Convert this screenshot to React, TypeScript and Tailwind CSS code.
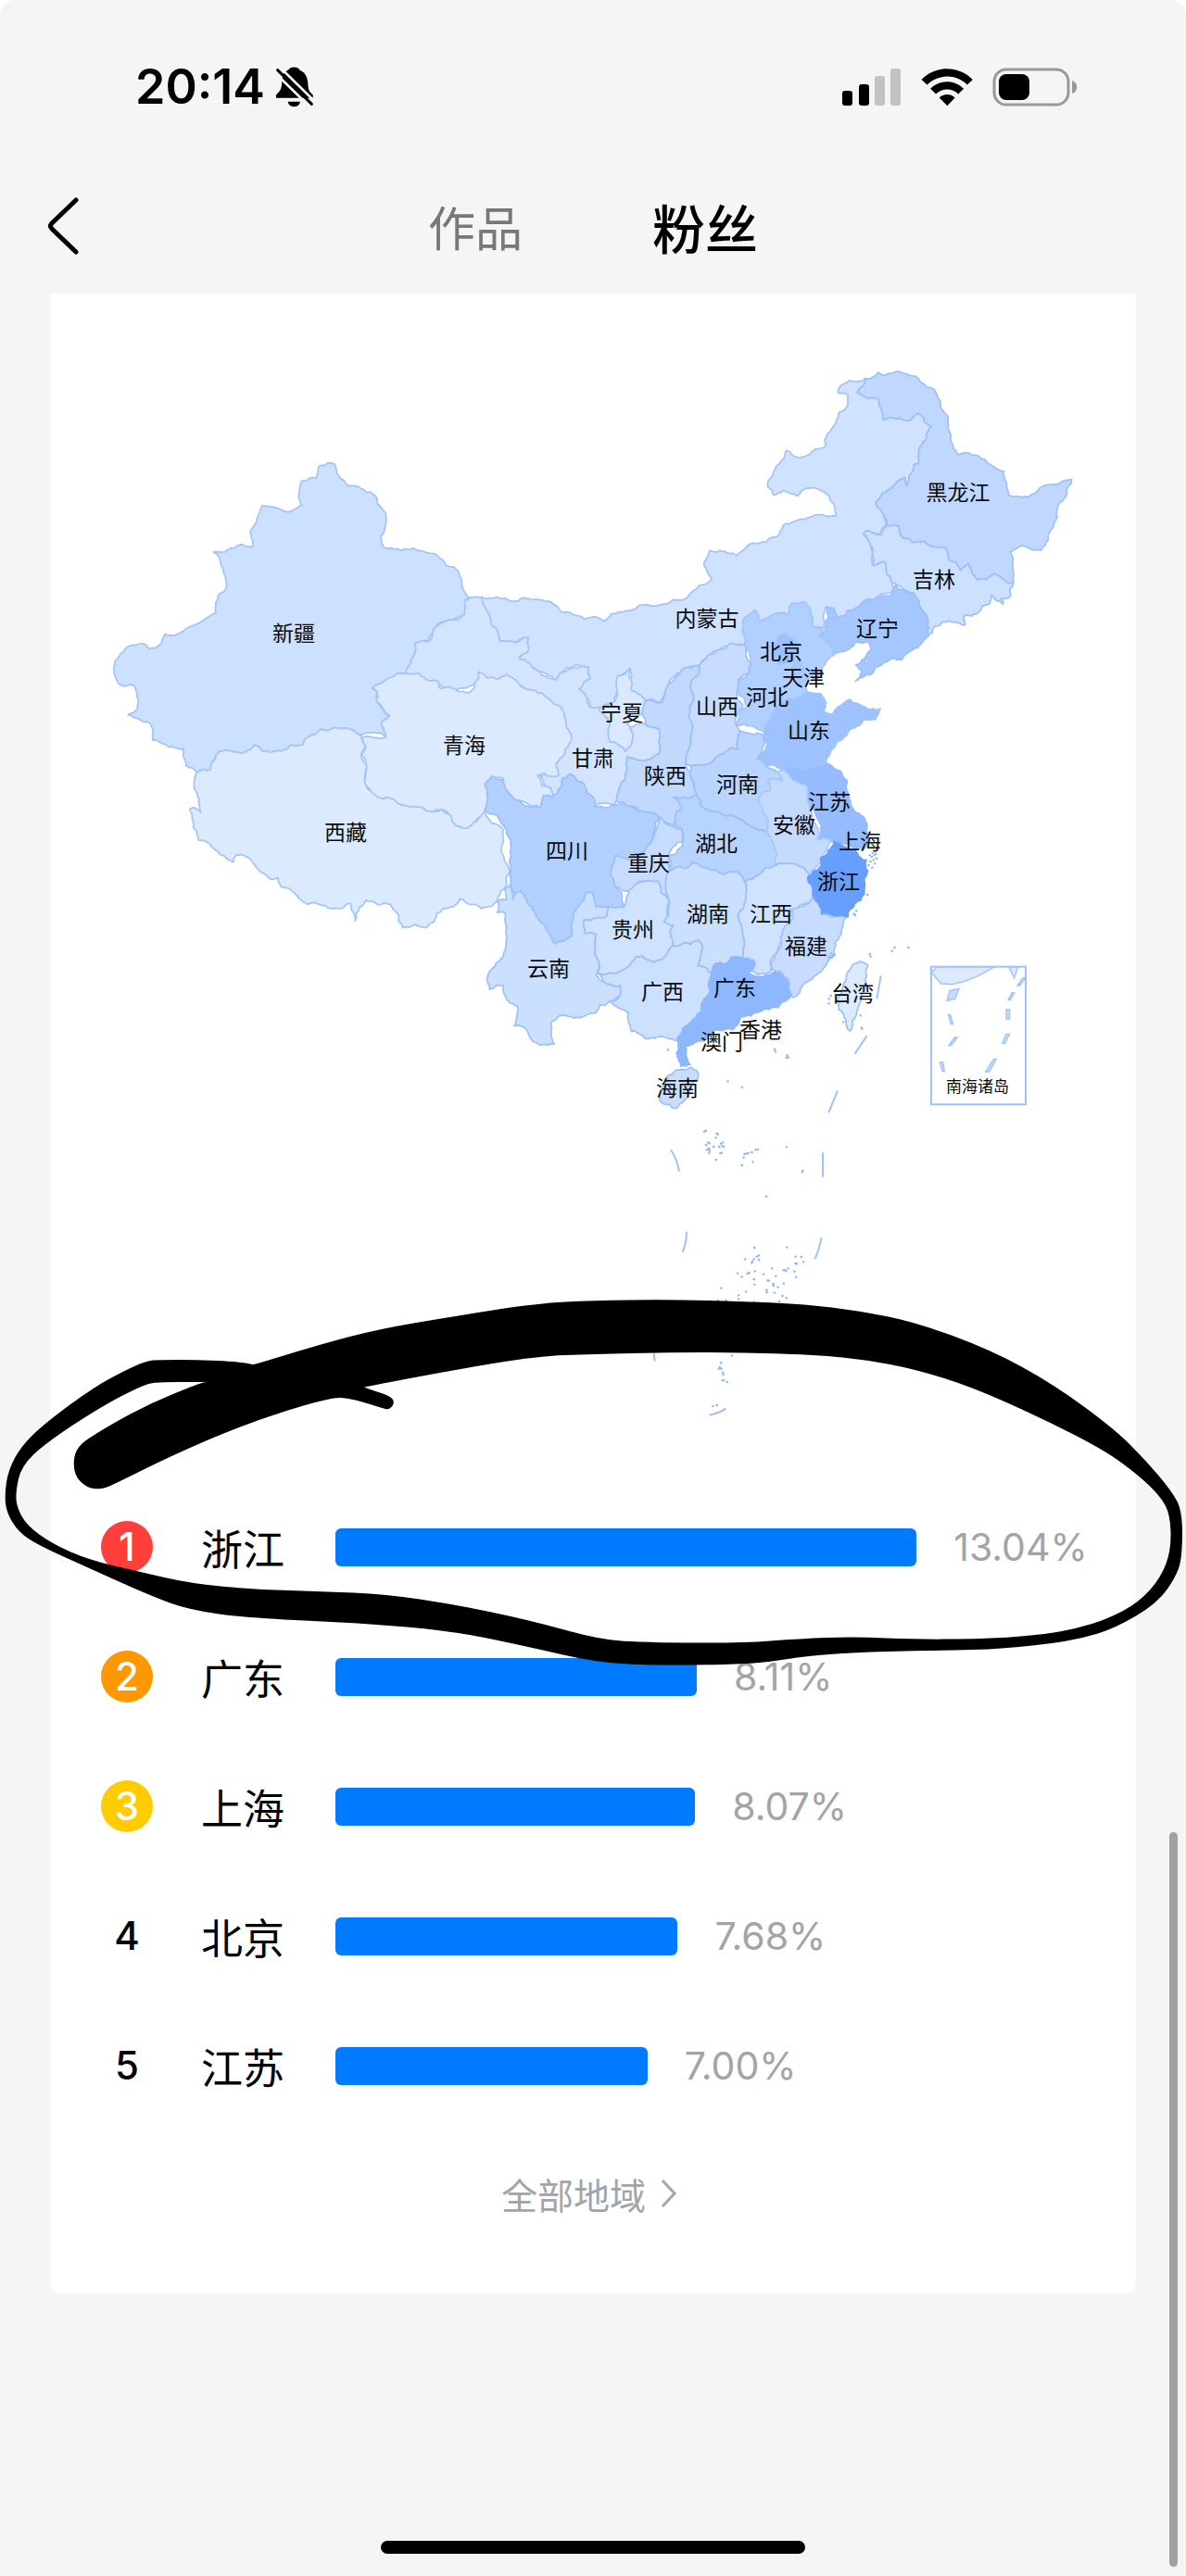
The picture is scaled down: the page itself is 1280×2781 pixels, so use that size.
import { useState } from "react";

type Pt = [number, number];

const parse = (s: string): Pt[] =>
  s
    .trim()
    .split(/\s+/)
    .map((p) => p.split(",").map(Number) as Pt);

// small repeatable bump so that a border gets the same shape from both sides
const bump = (a: Pt, b: Pt) => {
  const n = Math.sin(a[0] * 12.9 + a[1] * 78.2 + b[0] * 37.7 + b[1] * 4.1) * 43758.5;
  return n - Math.floor(n) - 0.5;
};

const split = (a: Pt, b: Pt, depth: number): Pt[] => {
  const flip = a[0] > b[0] || (a[0] === b[0] && a[1] > b[1]);
  const [p, q] = flip ? [b, a] : [a, b];
  const dx = q[0] - p[0];
  const dy = q[1] - p[1];
  if (depth === 0 || Math.hypot(dx, dy) < 9) return [a];
  const k = bump(p, q) * 0.3;
  const mid: Pt = [(p[0] + q[0]) / 2 - dy * k, (p[1] + q[1]) / 2 + dx * k];
  return [...split(a, mid, depth - 1), ...split(mid, b, depth - 1)];
};

const border = (s: string) => {
  const pts = parse(s);
  const out = pts.flatMap((p, i) => split(p, pts[(i + 1) % pts.length], 3));
  return "M" + out.map(([x, y]) => `${x.toFixed(1)},${y.toFixed(1)}`).join("L") + "Z";
};

// closed curve that rounds every corner between the midpoints
const curve = (s: string) => {
  const p = parse(s);
  const mid = (a: Pt, b: Pt) => `${(a[0] + b[0]) / 2},${(a[1] + b[1]) / 2}`;
  let d = `M${mid(p[p.length - 1], p[0])}`;
  p.forEach((pt, i) => {
    d += `Q${pt[0]},${pt[1]} ${mid(pt, p[(i + 1) % p.length])}`;
  });
  return d + "Z";
};

// the map is stored in four sheets, each with its own origin and scale
const sheets = [
  {
    transform: "translate(100 470) scale(.33333 .35714)",
    regions: [
      {
        name: "新疆",
        fill: "#cce0ff",
        line: "#a3c3fb",
        pts: "735,92 785,88 795,120 830,155 875,162 905,175 925,210 950,240 945,285 932,310 945,340 1000,348 1075,352 1145,395 1170,398 1195,455 1220,490 1205,500 1205,540 1150,560 1110,580 1090,620 1045,628 1030,690 1015,720 905,765 922,775 920,805 962,848 935,870 950,912 870,905 825,886 770,890 710,905 680,935 610,955 550,955 525,935 475,960 410,955 380,1012 340,1018 303,1000 295,948 245,942 195,922 185,870 115,845 145,828 130,755 85,752 68,705 90,660 165,630 180,645 215,635 235,600 275,600 400,535 410,480 432,462 410,370 390,352 480,330 520,335 510,290 548,212 640,230 678,212 675,140 725,128",
      },
      {
        name: "西藏",
        fill: "#dceaff",
        line: "#a3c3fb",
        pts: "340,1018 380,1012 410,955 475,960 525,935 550,955 610,955 680,935 710,905 770,890 825,886 870,905 885,940 870,965 888,1000 880,1040 900,1075 940,1098 975,1100 1010,1118 1080,1135 1130,1130 1160,1150 1175,1180 1210,1188 1269,1137 1329,1193 1350,1313 1341,1358 1311,1403 1260,1431 1200,1403 1190,1400 1160,1425 1115,1445 1080,1488 1005,1488 990,1450 965,1418 885,1405 865,1425 850,1468 835,1415 770,1430 695,1418 655,1385 610,1365 600,1338 570,1338 500,1275 465,1268 455,1290 395,1252 345,1225 325,1185 315,1130 330,1125 350,1140 345,1100 328,1065 330,1035",
      },
    ],
  },
  {
    transform: "translate(740 380) scale(.33333 .35714)",
    regions: [
      {
        name: "内蒙古",
        fill: "#cfe2ff",
        line: "#a3c3fb",
        pts: "580,80 530,85 495,110 495,125 525,130 525,160 495,185 470,235 450,265 455,280 420,293 375,318 325,298 280,375 265,405 285,433 320,418 360,435 390,412 440,420 480,460 487,495 440,492 365,508 320,520 300,555 260,575 220,578 165,615 110,600 80,600 60,635 85,685 45,705 0,745 -80,764 -150,766 -210,786 -265,814 -290,801 -365,794 -430,761 -490,748 -560,754 -660,741 -630,825 -600,875 -510,864 -510,903 -540,925 -480,963 -420,991 -405,969 -315,952 -310,986 -345,1019 -310,1074 -230,1058 -220,980 -180,956 -180,1024 -130,1054 -80,1058 -55,1002 -10,958 45,947 100,903 190,885 185,820 225,780 240,815 300,790 330,795 345,760 385,755 410,800 412,830 450,830 455,770 480,775 495,805 560,770 620,740 675,725 668,680 645,635 605,645 595,570 575,550 590,540 630,550 650,520 640,490 615,455 650,420 710,380 715,405 740,340 755,335 757,290 795,225 755,185 730,205 640,205 625,145 590,140 555,122 580,95",
      },
      {
        name: "黑龙江",
        fill: "#c0d8ff",
        line: "#9dbffb",
        pts: "580,80 670,65 760,90 800,110 825,160 850,230 880,310 970,325 1030,360 1045,430 1130,428 1160,405 1250,385 1235,430 1205,465 1190,530 1150,600 1090,585 1050,605 1060,650 1060,700 1000,670 945,690 915,640 890,660 850,625 845,595 800,590 770,572 700,560 690,525 650,525 640,490 615,455 650,420 710,380 715,405 740,340 755,335 757,290 795,225 755,185 730,205 640,205 625,145 590,140 555,122 580,95",
      },
      {
        name: "吉林",
        fill: "#cce0ff",
        line: "#9dbffb",
        pts: "575,550 590,540 635,550 650,525 690,525 700,560 770,572 800,590 845,595 850,625 890,660 915,640 945,690 1000,670 1060,700 1050,740 1020,745 1028,762 990,735 985,760 945,790 905,795 905,825 835,815 785,860 765,780 740,730 685,705 668,695 645,635 605,645 595,575",
      },
      {
        name: "辽宁",
        fill: "#a5c7ff",
        line: "#9bbffb",
        pts: "455,770 480,775 495,805 560,770 620,740 665,735 680,705 720,725 740,730 765,780 785,855 735,900 700,930 640,940 600,975 550,995 570,965 550,945 600,900 590,875 550,875 515,905 480,915 465,880 435,860 455,825",
      },
      {
        name: "河北",
        fill: "#b1d0ff",
        line: "#a3c5ff",
        pts: "190,885 185,820 225,780 240,815 300,790 330,795 345,760 385,755 410,800 412,830 445,835 435,860 465,880 480,915 445,950 430,985 400,980 390,1010 395,1030 345,1050 290,1080 270,1115 255,1150 165,1130 175,1090 200,1070 165,1030 175,990 210,965 210,930",
      },
      {
        name: "北京",
        fill: "#9cc1ff",
        line: "#a3c5ff",
        pts: "300,860 320,850 365,880 350,930 300,945 285,900",
      },
      {
        name: "天津",
        fill: "#a9caff",
        line: "#a3c5ff",
        pts: "355,930 375,945 395,985 370,1010 345,970",
      },
      {
        name: "江苏",
        fill: "#94bcff",
        line: "#94bcff",
        pts: "300,1255 400,1250 450,1240 500,1265 525,1330 545,1385 580,1410 590,1460 580,1500 530,1490 470,1480 430,1470 440,1430 420,1390 385,1310 345,1295",
      },
      {
        name: "山东",
        fill: "#9ec2ff",
        line: "#9ec2ff",
        pts: "270,1120 290,1080 345,1050 395,1030 440,1035 455,1060 445,1085 475,1095 500,1070 530,1050 570,1070 630,1078 615,1110 575,1110 535,1140 490,1180 455,1240 400,1260 300,1258 230,1225 265,1185 255,1150",
      },
    ],
  },
  {
    transform: "translate(500 560) scale(.33333 .39541)",
    regions: [
      {
        name: "甘肃",
        fill: "#d3e4ff",
        line: "#a3c3fb",
        pts: "20,215 60,214 90,290 120,335 210,325 210,360 180,380 240,415 300,440 315,420 405,405 410,435 375,465 410,515 440,515 475,560 475,610 525,635 545,615 550,590 530,565 590,560 635,575 635,640 570,660 530,650 525,710 495,770 490,780 425,785 400,750 385,720 345,697 320,710 315,735 290,760 245,700 300,670 330,630 330,545 275,500 175,455 50,440 -35,470 -120,445 -185,423 -170,396 -155,340 -110,332 -90,296 -50,278 5,260 5,224",
      },
      {
        name: "青海",
        fill: "#dceaff",
        line: "#a3c3fb",
        pts: "-185,423 -145,421 -120,439 -80,445 -75,463 -35,463 10,475 35,463 50,436 50,418 80,435 110,438 140,425 175,445 205,465 240,475 275,490 310,510 330,545 350,590 330,630 300,670 310,700 260,695 240,700 255,730 285,735 290,760 262,755 250,790 200,775 165,765 135,730 130,710 95,705 70,725 80,760 70,800 40,825 10,845 -25,838 -40,811 -70,793 -120,797 -190,782 -225,766 -260,764 -300,743 -320,712 -312,676 -330,644 -315,621 -330,599 -250,596 -265,558 -238,538 -280,499 -278,472 -295,463",
      },
      {
        name: "宁夏",
        fill: "#dbe9ff",
        line: "#a3c3fb",
        pts: "440,520 490,500 500,430 540,408 545,470 590,497 580,530 530,560 550,590 545,615 525,635 475,610 475,560",
      },
      {
        name: "陕西",
        fill: "#c2d9ff",
        line: "#9dbffb",
        pts: "765,400 710,410 665,450 645,500 590,497 580,530 590,560 635,575 635,640 570,660 530,650 525,710 495,770 540,785 635,815 685,840 690,800 710,790 680,760 755,755 735,700 720,668 735,620 730,540 745,500 735,460 765,420",
      },
      {
        name: "山西",
        fill: "#c7dcff",
        line: "#9dbffb",
        pts: "765,400 820,360 915,345 915,375 930,395 925,420 890,440 885,490 905,510 880,550 895,580 890,630 830,645 735,675 720,668 735,620 730,540 745,500 735,460 765,420",
      },
      {
        name: "四川",
        fill: "#b1d0ff",
        line: "#9bbffb",
        pts: "70,725 95,703 130,710 135,730 165,765 200,785 250,790 262,755 290,760 315,735 320,710 345,697 385,720 400,750 420,760 425,785 500,780 540,785 590,800 635,815 620,850 610,880 575,915 530,930 490,920 475,970 490,1000 515,1030 520,1060 470,1060 430,1060 420,1020 400,1020 380,1050 355,1080 350,1140 295,1160 265,1110 235,1085 205,1040 185,1015 170,1040 155,1005 150,940 140,860 110,810 70,795 78,760",
      },
      {
        name: "重庆",
        fill: "#c7dcff",
        line: "#9dbffb",
        pts: "635,815 650,825 705,845 712,880 680,895 665,920 665,950 670,975 665,1040 640,1020 630,990 590,990 570,990 560,1015 515,1015 490,1000 475,970 490,920 530,930 575,915 610,880",
      },
      {
        name: "河南",
        fill: "#b9d4ff",
        line: "#9bbffb",
        pts: "735,675 830,645 890,630 895,580 970,590 975,610 950,655 1015,690 1035,715 985,715 995,740 955,765 985,815 980,855 930,840 870,810 810,800 770,785 755,755 735,700",
      },
      {
        name: "湖北",
        fill: "#b7d3ff",
        line: "#9bbffb",
        pts: "680,760 755,755 770,785 810,800 870,810 930,840 980,855 1000,880 1015,945 960,970 910,990 890,965 840,970 790,955 740,938 720,955 670,960 665,920 710,890 705,845 685,835 690,800 710,790",
      },
      {
        name: "云南",
        fill: "#cbdfff",
        line: "#9dbffb",
        pts: "110,1045 140,1040 135,1010 150,1000 160,1040 185,1015 205,1040 235,1085 265,1110 295,1160 350,1140 355,1080 380,1050 400,1020 420,1020 430,1060 470,1060 465,1085 430,1090 392,1095 395,1132 430,1135 425,1190 440,1215 430,1245 475,1270 510,1275 505,1305 470,1320 440,1330 430,1350 385,1360 330,1355 285,1375 295,1435 265,1435 215,1415 200,1390 165,1385 175,1330 140,1310 130,1275 85,1285 80,1245 105,1215 130,1190 138,1130 135,1075 110,1075",
      },
      {
        name: "贵州",
        fill: "#cfe2ff",
        line: "#9dbffb",
        pts: "520,1060 530,1030 555,1000 590,990 630,990 640,1020 665,1040 660,1080 680,1110 670,1130 680,1165 640,1205 600,1205 560,1195 530,1225 475,1240 435,1240 440,1215 425,1190 430,1135 395,1132 392,1095 430,1090 465,1085 470,1060",
      },
      {
        name: "广西",
        fill: "#cce0ff",
        line: "#9dbffb",
        pts: "435,1240 475,1240 530,1225 560,1195 600,1205 640,1205 680,1165 710,1160 760,1150 775,1170 760,1220 785,1225 805,1240 800,1290 775,1320 770,1345 735,1375 720,1400 690,1425 630,1415 590,1420 545,1400 535,1350 490,1330 475,1318 505,1305 510,1275 465,1270",
      },
      {
        name: "湖南",
        fill: "#cbdfff",
        line: "#9dbffb",
        pts: "670,960 720,955 740,938 790,955 840,970 890,965 910,990 915,1040 890,1080 900,1110 910,1150 905,1200 865,1200 850,1215 815,1215 805,1240 785,1225 760,1220 775,1170 760,1150 710,1160 680,1165 670,1130 680,1110 650,1100 665,1080 665,1040",
      },
      {
        name: "安徽",
        fill: "#c4daff",
        line: "#a8c8ff",
        pts: "1015,690 1040,685 1080,720 1110,730 1120,790 1150,850 1145,875 1190,875 1165,920 1150,945 1120,970 1080,945 1040,940 1015,945 1000,880 980,855 985,815 955,765 995,740 985,715 1035,715",
      },
      {
        name: "江西",
        fill: "#cfe2ff",
        line: "#9dbffb",
        pts: "910,990 960,970 1015,945 1040,940 1080,945 1120,970 1115,990 1135,1015 1130,1045 1090,1055 1060,1070 1060,1110 1035,1150 1020,1170 1000,1200 995,1235 955,1245 930,1235 945,1210 905,1200 910,1150 900,1110 890,1080 915,1040",
      },
      {
        name: "广东",
        fill: "#8db7ff",
        line: "#8db7ff",
        pts: "805,1240 815,1215 850,1215 865,1200 940,1205 945,1220 925,1240 960,1250 1000,1240 1015,1230 1055,1250 1062,1290 1055,1310 1020,1335 960,1345 900,1360 870,1395 820,1395 790,1420 750,1430 720,1440 725,1475 735,1490 705,1495 690,1460 695,1415 730,1380 770,1345 780,1310 800,1290",
      },
    ],
  },
  {
    transform: "translate(700 860) scale(.33333)",
    regions: [
      {
        name: "福建",
        fill: "#c7dcff",
        line: "#9dbffb",
        pts: "460,365 500,355 530,330 550,345 560,380 590,390 615,385 640,390 625,430 605,470 600,510 575,545 540,580 515,600 480,645 465,650 455,600 425,565 400,560 410,510 430,480 435,430 465,400",
      },
      {
        name: "浙江",
        fill: "#669fff",
        line: "#669fff",
        pts: "600,145 640,165 670,175 700,205 710,240 700,280 695,320 670,345 645,390 600,385 560,380 550,345 535,325 530,290 515,265 550,235 560,195 580,185",
      },
      {
        name: "海南",
        fill: "#c9deff",
        line: "#9dbffb",
        pts: "60,905 90,885 140,878 158,890 160,915 130,970 90,1010 40,990 38,960",
      },
      {
        name: "台湾",
        fill: "#dceaff",
        line: "#9dbffb",
        pts: "685,533 710,545 705,610 680,680 660,725 652,760 640,725 615,690 612,650 640,590 655,555",
      },
    ],
  },
];

const labels: [string, number, number][] = [
  ["新疆", 317, 684],
  ["西藏", 373, 899],
  ["青海", 501, 805],
  ["内蒙古", 763, 668],
  ["黑龙江", 1034, 532],
  ["吉林", 1008, 626],
  ["辽宁", 947, 679],
  ["北京", 843, 704],
  ["天津", 867, 732],
  ["河北", 828, 753],
  ["山西", 774, 763],
  ["宁夏", 671, 770],
  ["山东", 873, 789],
  ["甘肃", 640, 819],
  ["陕西", 718, 838],
  ["河南", 796, 847],
  ["江苏", 895, 866],
  ["安徽", 857, 891],
  ["上海", 928, 909],
  ["湖北", 773, 911],
  ["四川", 612, 919],
  ["重庆", 700, 932],
  ["浙江", 905, 952],
  ["湖南", 764, 987],
  ["江西", 832, 987],
  ["福建", 870, 1022],
  ["贵州", 683, 1004],
  ["云南", 592, 1046],
  ["广西", 715, 1071],
  ["广东", 793, 1067],
  ["台湾", 920, 1073],
  ["香港", 821, 1112],
  ["澳门", 779, 1125],
  ["海南", 731, 1175],
];

const seaIslets =
  "360,125 365,122 400,131 404,134 397,145 372,160 376,163 366,168 368,184 374,180 377,186 376,194 390,174 408,174 418,172 422,174 414,164 420,160 412,195 416,194 398,216 490,198 497,196 502,195 514,192 525,184 533,183 487,209 482,234 517,223 626,175 678,252 677,256 561,335 522,501 627,500 492,538 516,545 514,550 521,538 530,530 536,526 537,540 655,530 674,531 655,552 659,553 681,547 579,568 616,574 621,573 625,577 632,568 468,584 481,595 500,585 505,582 524,577 552,587 591,593 565,607 569,608 521,603 523,620 583,618 584,624 598,629 617,617 652,578 657,596 414,632 562,638 562,645 587,647 495,643 613,657 626,664 471,655 471,668 487,677 405,672 430,672 521,677 603,675 449,850 414,874 410,888 407,893 415,893 419,905 421,912 419,930 423,931 434,936 388,1014 401,1011";

const coastIslets =
  "788,500 796,489 841,489 716,510 718,518 715,190 722,195 730,190 738,200 728,205 718,210 732,217 712,222 724,230 735,185 725,182 705,205 708,318 672,370 668,384 664,380 590,508 598,516 602,512 592,522 584,520 590,645 584,655 583,670 686,709 689,748 691,752 408,818 410,826 448,838 452,844 446,846 256,922 302,941 62,820 630,730";

const scribbleOuter =
  "275,1473 347,1451 408,1435 490,1421 580,1407 640,1404 722,1403 803,1405 869,1408 926,1415 987,1427 1069,1457 1138,1495 1203,1543 1236,1576 1264,1609 1276,1631 1276,1679 1270,1701 1249,1731 1203,1758 1167,1769 1130,1775 1069,1781 991,1782 922,1784 869,1788 832,1794 795,1797 701,1798 640,1794 571,1778 490,1761 388,1752 269,1747 204,1738 163,1723 94,1692 41,1668 20,1654 7,1633 5,1613 9,1587 23,1561 49,1536 102,1497 140,1477 159,1469 172,1468 212,1468 257,1470 273,1473";

const scribbleInner =
  "224,1492 216,1493 155,1518 94,1553 82,1565 79,1580 82,1595 94,1606 108,1608 120,1604 184,1572 265,1537 357,1508 380,1510 412,1520 420,1522 426,1515 422,1507 392,1498 395,1497 490,1479 580,1464 640,1462 722,1460 803,1460 885,1463 934,1468 987,1478 1048,1497 1122,1530 1191,1565 1228,1592 1252,1615 1263,1635 1264,1673 1253,1703 1229,1730 1195,1748 1162,1758 1130,1764 1073,1769 991,1770 922,1767 864,1769 799,1774 681,1773 640,1768 571,1749 490,1732 416,1721 347,1718 278,1716 208,1710 147,1696 96,1684 57,1667 29,1647 18,1627 17,1610 23,1583 49,1558 110,1518 155,1495 170,1492 215,1492";

const rows = [
  { rank: 1, name: "浙江", value: 13.04, badge: "bg-[#ff3f3c] text-white" },
  { rank: 2, name: "广东", value: 8.11, badge: "bg-[#ff9800] text-white" },
  { rank: 3, name: "上海", value: 8.07, badge: "bg-[#ffcc00] text-white" },
  { rank: 4, name: "北京", value: 7.68, badge: "text-black" },
  { rank: 5, name: "江苏", value: 7.0, badge: "text-black" },
];

function Dots({ pts, size }: { pts: string; size: number }) {
  return (
    <path
      d={parse(pts)
        .map(([x, y]) => `M${x},${y}h1`)
        .join("")}
      stroke="#8fb5f7"
      strokeWidth={size}
      strokeLinecap="round"
    />
  );
}

function StatusBar() {
  return (
    <div className="flex h-[188px] items-center justify-between pl-[146px] pr-[117px]">
      <div className="flex items-center gap-3">
        <span className="text-[52px] font-semibold leading-none">20:14</span>
        {/* muted bell */}
        <svg viewBox="500 38 122 134" className="h-[44px] w-[40px]">
          <path
            d="M541 48c4-12 32-12 37 1 20 8 26 26 27 48 1 16 4 24 16 33v11H500v-10c15-15 18-20 19-42 0-20 6-34 22-41Z"
            fill="black"
          />
          <path d="M539 153h40c-1 22-39 22-40 0Z" fill="black" />
          <path d="M497 59 611 170M511 38 629 154" stroke="#f3f5f7" strokeWidth="8" />
          <path d="M505 49 617 161" stroke="black" strokeWidth="9" strokeLinecap="round" />
        </svg>
      </div>
      <div className="flex items-center">
        {/* signal */}
        <svg viewBox="0 0 64 40" className="h-[40px] w-[64px]">
          <rect x="0" y="24" width="11" height="16" rx="3" />
          <rect x="18" y="17" width="11" height="23" rx="3" />
          <rect x="35" y="8" width="11" height="32" rx="3" fill="#c1c2c4" />
          <rect x="52" y="0" width="11" height="40" rx="3" fill="#c1c2c4" />
        </svg>
        {/* wifi */}
        <svg viewBox="310 38 168 124" className="ml-[21px] h-[41px] w-[56px]">
          <path d="M311 74c46-47 121-47 167 0l-18 17c-36-36-95-36-131 0Z" />
          <path d="M340 104c30-31 79-31 109 0l-18 17c-20-20-53-20-73 0Z" />
          <path d="M369 133c14-14 37-14 51 0l-25 27Z" />
        </svg>
        {/* battery */}
        <svg viewBox="0 0 92 42" className="ml-[21px] h-[42px] w-[92px]">
          <rect x="2" y="2" width="80" height="38" rx="13" fill="none" stroke="#98999b" strokeWidth="3" />
          <rect x="7" y="7" width="33" height="28" rx="8" />
          <path d="M86 14c7 2 7 12 0 14Z" fill="#98999b" />
        </svg>
      </div>
    </div>
  );
}

function ChinaMap() {
  return (
    <svg viewBox="54 317 1172 1283" fill="none" className="block w-full">
      {sheets.map((sheet) => (
        <g key={sheet.transform} transform={sheet.transform}>
          {sheet.regions.map((r) => (
            <path
              key={r.name}
              d={border(r.pts)}
              fill={r.fill}
              stroke={r.line}
              strokeWidth="1.7"
              strokeLinejoin="round"
              vectorEffect="non-scaling-stroke"
            />
          ))}
        </g>
      ))}

      {/* coast, dashes off the coast and the inset box */}
      <g transform="translate(700 860) scale(.33333)">
        <Dots pts={coastIslets} size={7} />
        <path d="M752 580 739 655M707 774 668 833M612 953 583 1023" stroke="#a0c1fb" strokeWidth="6" />
        <path
          d="M935 551 915 569 947 606 985 608C1040 598 1080 575 1120 551ZM1166 551 1184 588 1196 551Z"
          fill="#dceaff"
          stroke="#9dc1ff"
          strokeWidth="4"
        />
        <path
          d="M975 628 1005 622 992 655 966 661ZM970 706 977 706 986 737 979 737ZM972 806 980 806 1000 780 991 780ZM943 860 953 860 958 889 951 889ZM1194 612 1202 612 1220 587 1212 587ZM1164 659 1171 659 1184 635 1177 635ZM1158 690H1169V720H1158ZM1145 799 1154 799 1168 769 1158 769ZM1091 891 1103 891 1126 850 1117 850Z"
          fill="#c7dcff"
          stroke="#9dc1ff"
          strokeWidth="4"
        />
        <rect x="915" y="551" width="306" height="446" stroke="#9dc1ff" strokeWidth="6" />
      </g>

      {/* south sea */}
      <g transform="translate(640 1180) scale(.33333)">
        <Dots pts={seaIslets} size={7} />
        <path
          d="M252 184Q272 215 279 254M744 193V272M303 450Q303 485 290 516M740 468Q732 508 718 538M196 800Q196 840 200 868M377 1043Q408 1038 430 1022"
          stroke="#a0c1fb"
          strokeWidth="6"
        />
      </g>

      <g
        fill="#0a0a0a"
        textAnchor="middle"
        className="font-['Noto_Sans_CJK_SC',sans-serif] text-[23px]"
      >
        {labels.map(([name, x, y]) => (
          <text key={name} x={x} y={y + 8}>
            {name}
          </text>
        ))}
        <text x="1055" y="1179" className="text-[17px]">
          南海诸岛
        </text>
      </g>
    </svg>
  );
}

export default function App() {
  const [tab, setTab] = useState("粉丝");

  return (
    <div className="bg-white font-['Inter',sans-serif] text-black">
      <div className="relative overflow-hidden rounded-t-[16px] bg-[#f3f5f7] pb-6">
        <StatusBar />

        {/* header */}
        <header className="mb-[11px] grid h-[118px] grid-cols-[120px_1fr_120px] items-center pb-[6px]">
          <button aria-label="返回" className="justify-self-start pl-[50px]">
            <svg viewBox="0 0 36 62" fill="none" className="h-[62px] w-[36px]">
              <path
                d="M32 3 6 28Q3 31 6 34L32 59"
                stroke="black"
                strokeWidth="5"
                strokeLinecap="round"
              />
            </svg>
          </button>
          <nav className="flex items-center justify-center gap-[140px] font-['Noto_Sans_CJK_SC',sans-serif] leading-none">
            {["作品", "粉丝"].map((t) => (
              <button
                key={t}
                onClick={() => setTab(t)}
                className={
                  tab === t
                    ? "text-[57px] font-medium text-black"
                    : "text-[51px] text-[#77787a]"
                }
              >
                {t}
              </button>
            ))}
          </nav>
        </header>

        <main className="mx-[54px] rounded-b-[12px] bg-white">
          <ChinaMap />

          {/* ranking */}
          <ul>
            {rows.map((row) => (
              <li key={row.rank} className="flex h-[140px] items-center pl-[55px]">
                <span
                  className={`flex h-[56px] w-[56px] shrink-0 items-center justify-center rounded-full text-[42px] font-medium leading-none ${row.badge}`}
                >
                  {row.rank}
                </span>
                <span className="ml-[52px] w-[145px] shrink-0 font-['Noto_Sans_CJK_SC',sans-serif] text-[45px] leading-none">
                  {row.name}
                </span>
                <div className="flex flex-1 items-center gap-[40px]">
                  <div
                    className="h-[41px] shrink-0 rounded-[6px] bg-[#007aff]"
                    style={{ width: `${(row.value / 13.04) * 72.6}%` }}
                  />
                  <span className="text-[41px] leading-none text-[#a3a4a6]">
                    {row.value.toFixed(2)}%
                  </span>
                </div>
              </li>
            ))}
          </ul>

          <div className="flex h-[176px] justify-center pr-[8px] pt-[46px]">
            <a
              href="#all"
              className="flex h-[44px] items-center gap-4 font-['Noto_Sans_CJK_SC',sans-serif] text-[39px] leading-none text-[#a3a4a6]"
            >
              全部地域
              <svg viewBox="0 0 18 32" fill="none" className="h-[32px] w-[18px]">
                <path d="M2 2 15 16 2 30" stroke="#a3a4a6" strokeWidth="3" />
              </svg>
            </a>
          </div>
        </main>

        {/* home indicator */}
        <div className="mx-auto mt-[267px] h-[14px] w-[458px] rounded-full bg-black" />

        {/* scroll thumb */}
        <div className="absolute bottom-[10px] right-[9px] h-[793px] w-[9px] rounded-full bg-[#a0a1a3]" />

        {/* marker circle drawn over the first row */}
        <svg
          viewBox="0 1380 1280 440"
          className="pointer-events-none absolute left-0 top-[1380px] w-full"
        >
          <path d={curve(scribbleOuter) + curve(scribbleInner)} fillRule="evenodd" />
        </svg>
      </div>
    </div>
  );
}
